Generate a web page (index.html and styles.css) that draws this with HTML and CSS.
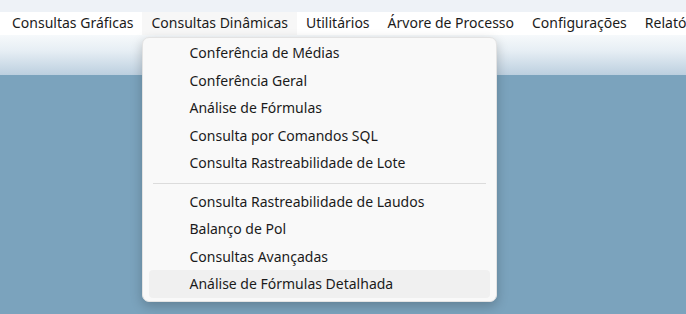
FILE: index.html
```html
<!DOCTYPE html>
<html>
	<head>
		<meta charset="utf-8" />
		<title>Consultas</title>
		<link rel="stylesheet" href="styles.css">
	</head>
	<body>
		<!--janela-->
		<div id="win">
			<div class="titlebar"></div>
			<!--barra de menu-->
			<ul class="menubar">
				<li class="menu-item">Consultas Gráficas</li>
				<li class="menu-item open">Consultas Dinâmicas
					<!--submenu aberto-->
					<div class="dropdown">
						<ul class="drop-list">
							<li class="drop-item">Conferência de Médias</li>
							<li class="drop-item">Conferência Geral</li>
							<li class="drop-item">Análise de Fórmulas</li>
							<li class="drop-item">Consulta por Comandos SQL</li>
							<li class="drop-item">Consulta Rastreabilidade de Lote</li>
						</ul>
						<div class="drop-sep"></div>
						<ul class="drop-list">
							<li class="drop-item">Consulta Rastreabilidade de Laudos</li>
							<li class="drop-item">Balanço de Pol</li>
							<li class="drop-item">Consultas Avançadas</li>
							<li class="drop-item hover">Análise de Fórmulas Detalhada</li>
						</ul>
					</div>
				</li>
				<li class="menu-item">Utilitários</li>
				<li class="menu-item">Árvore de Processo</li>
				<li class="menu-item">Configurações</li>
				<li class="menu-item">Relatórios</li>
			</ul>
			<!--area de trabalho-->
			<div class="workspace">
				<div class="toolbar"></div>
				<div class="desk"></div>
			</div>
		</div>
	</body>
</html>
```

FILE: styles.css
```css
*{margin: 0;padding: 0;border: none;box-sizing: border-box;}
ul,li{list-style: none;}
html,body{width: 100%;height: 100%;overflow: hidden;}
body{font-family: "Noto Sans", "Open Sans", sans-serif;font-size: 14px;color: #1b1b1b;background: #7ba3bd;}
#win{display: flex;flex-direction: column;height: 100%;}
.titlebar{height: 12px;background: #eef2f7;}
/*barra de menu*/
.menubar{display: flex;height: 23px;background: #fff;padding-left: 3px;white-space: nowrap;}
.menu-item{position: relative;padding: 0 9px;line-height: 22px;}
.menu-item.open{background: #f7f7f7;}
/*submenu*/
.dropdown{position: absolute;top: 25px;left: 0;width: 355px;padding: 1px 6px 3px;background: #f9f9f9;border: 1px solid #e3e3e3;border-radius: 7px;box-shadow: 0 4px 12px rgba(0,0,0,0.22);z-index: 10;line-height: normal;}
.drop-item{height: 27.5px;line-height: 27px;padding-left: 40px;border-radius: 4px;}
.drop-item.hover{background: #f0f0f0;}
.drop-sep{height: 1px;background: #dcdcdc;margin: 6px 4px 4px 4px;}
/*area de trabalho*/
.workspace{flex: 1;display: flex;flex-direction: column;}
.toolbar{height: 40px;background: linear-gradient(#f6f9fb, #e6eef4 40%, #bccfdf);}
.desk{flex: 1;background: #7ba3bd;}
```
